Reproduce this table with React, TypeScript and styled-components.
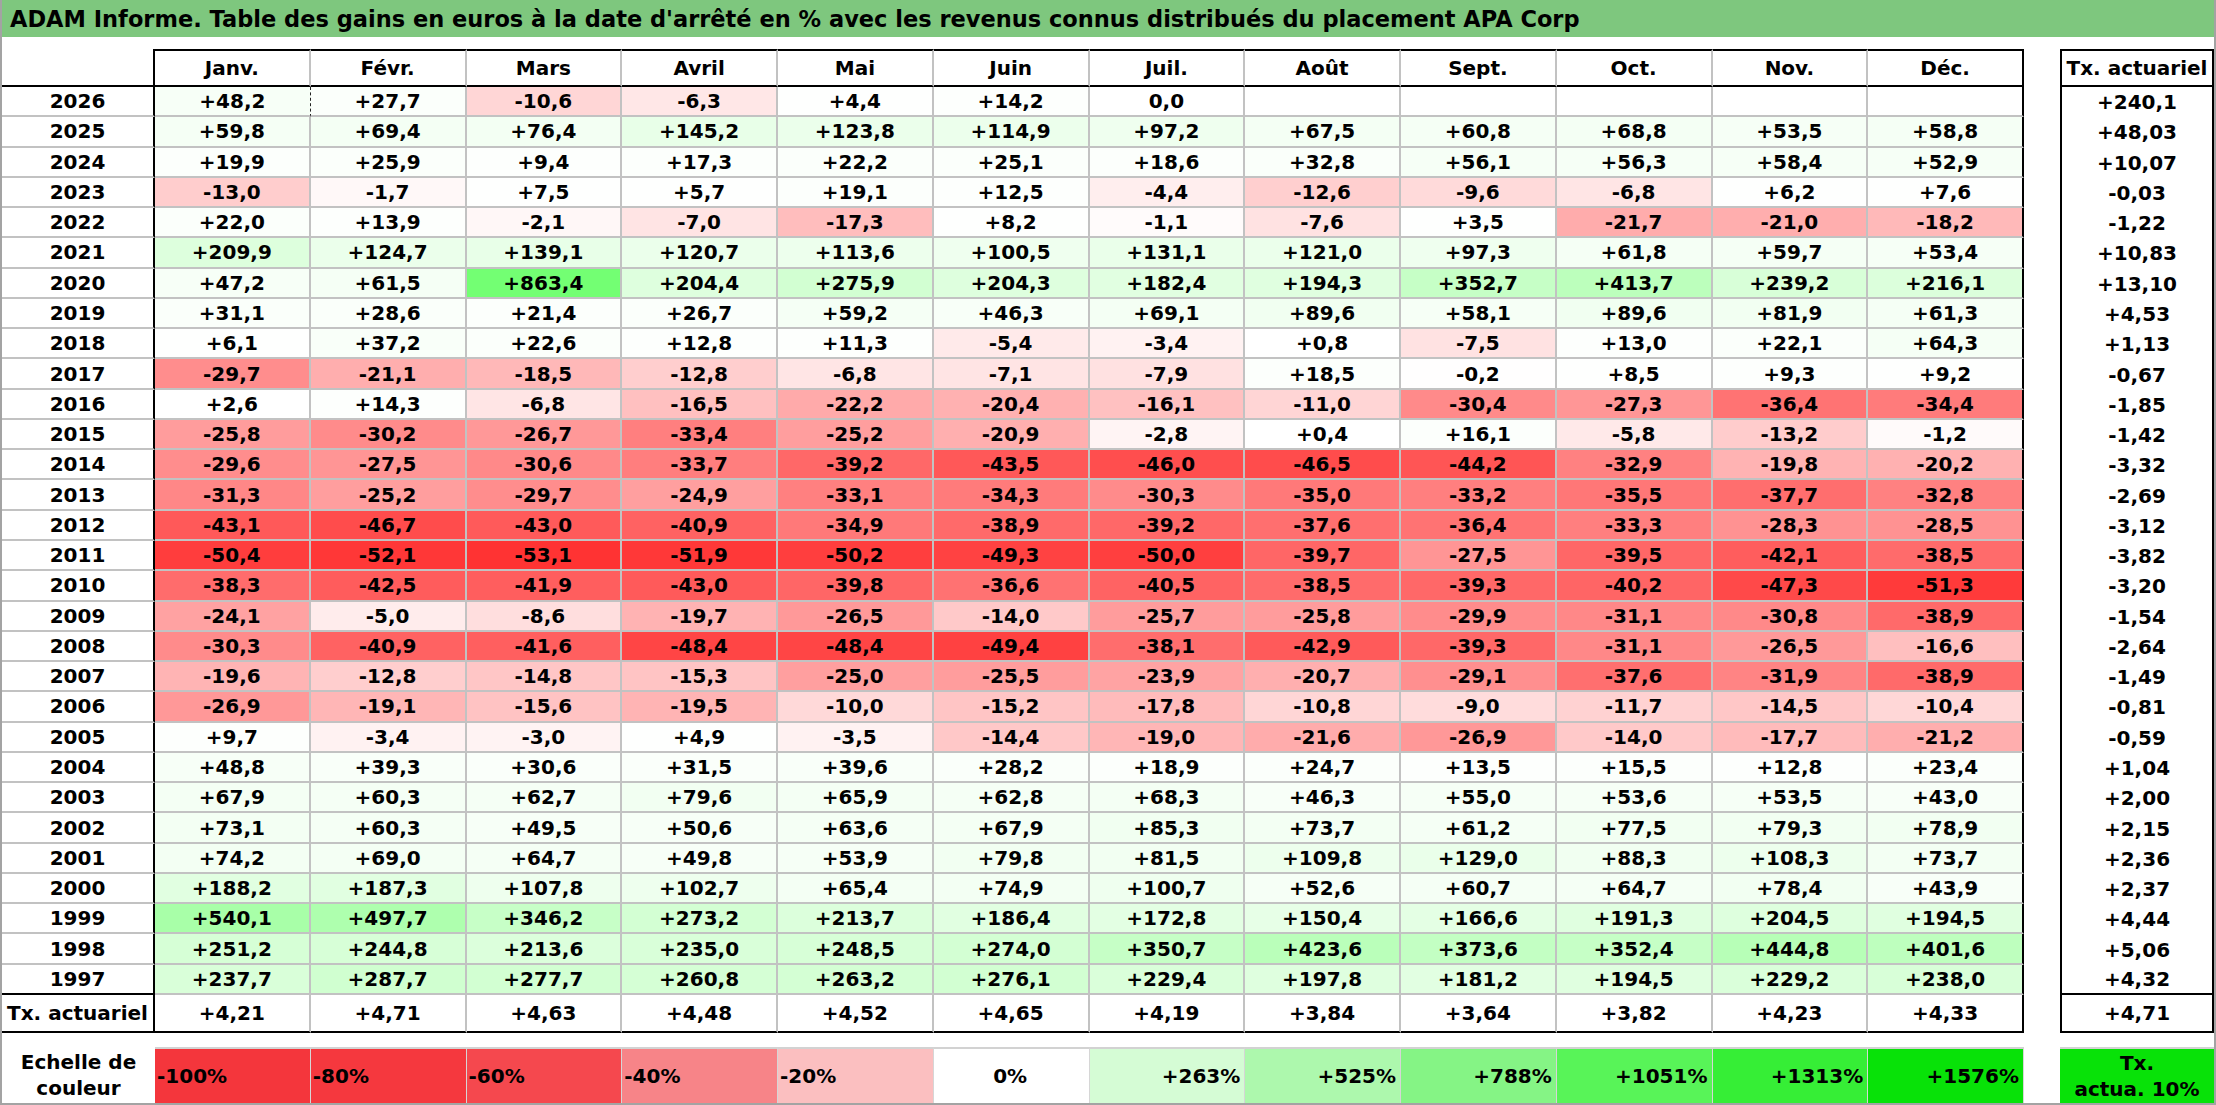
import React from 'react'
import styled, { createGlobalStyle } from 'styled-components'

const GlobalStyle = createGlobalStyle`
  html, body {
    margin: 0;
    padding: 0;
    background: #ffffff;
  }
  body {
    font-family: 'DejaVu Sans', 'Liberation Sans', sans-serif;
    color: #000;
  }
`

const GRID_LINE = '#c2c2c2'
const ROW_H = 30.27

const Page = styled.div`
  box-sizing: border-box;
  width: 2216px;
  height: 1105px;
  border: 2px solid #a3a3a3;
  border-top: none;
  background: #fff;
  display: flex;
  flex-direction: column;
`

const TitleBar = styled.div`
  height: 37px;
  background: #7ec77e;
  display: flex;
  align-items: center;
  padding-left: 8px;
  font-size: 22.5px;
  font-weight: bold;
  white-space: nowrap;
`

const Body = styled.div`
  padding-top: 12px;
  display: flex;
  flex-direction: column;
`

const TablesRow = styled.div`
  display: flex;
  gap: 36px;
`

const rowsTemplate = `38px repeat(30, ${ROW_H}px) 38px`

const MainGrid = styled.div`
  width: 2022px;
  display: grid;
  grid-template-columns: 153px repeat(12, 1fr);
  grid-template-rows: ${rowsTemplate};
  font-size: 20px;
  font-weight: bold;
`

const TxGrid = styled.div`
  width: 154px;
  display: grid;
  grid-template-rows: ${rowsTemplate};
  font-size: 20px;
  font-weight: bold;
`

const Cell = styled.div`
  box-sizing: border-box;
  display: flex;
  align-items: center;
  justify-content: center;
  white-space: nowrap;
  overflow: hidden;
`

const Corner = styled(Cell)`
  border-right: 2px solid #000;
  border-bottom: 2px solid #000;
`

const MonthHead = styled(Cell)<{ $last?: boolean }>`
  border-top: 2px solid #000;
  border-bottom: 2px solid #000;
  border-right: 2px solid ${p => (p.$last ? '#000' : GRID_LINE)};
`

const YearCell = styled(Cell)<{ $strong?: boolean }>`
  border-right: 2px solid #000;
  border-bottom: 2px solid ${p => (p.$strong ? '#000' : GRID_LINE)};
`

const ValueCell = styled(Cell)<{ $last?: boolean; $dashed?: boolean }>`
  border-bottom: 2px solid ${GRID_LINE};
  border-right: ${p =>
    p.$last ? '2px solid #000' : p.$dashed ? '1px dashed #222' : `2px solid ${GRID_LINE}`};
`

const FootLabel = styled(Cell)`
  border-right: 2px solid #000;
  border-bottom: 2px solid #000;
`

const FootCell = styled(Cell)<{ $last?: boolean }>`
  border-bottom: 2px solid #000;
  border-right: 2px solid ${p => (p.$last ? '#000' : GRID_LINE)};
`

const TxHead = styled(Cell)`
  border: 2px solid #000;
`

const TxCell = styled(Cell)<{ $strong?: boolean }>`
  border-left: 2px solid #000;
  border-right: 2px solid #000;
  border-bottom: ${p => (p.$strong ? '2px solid #000' : 'none')};
`

const TxFoot = styled(Cell)`
  border-left: 2px solid #000;
  border-right: 2px solid #000;
  border-bottom: 2px solid #000;
`

const LegendRow = styled.div`
  margin-top: 14px;
  height: 56px;
  display: flex;
  font-size: 20px;
  font-weight: bold;
`

const LegendLabel = styled.div`
  width: 153px;
  display: flex;
  align-items: center;
  justify-content: center;
  text-align: center;
  line-height: 26px;
`

const Swatches = styled.div`
  width: 1869px;
  display: grid;
  grid-template-columns: repeat(12, 1fr);
  margin-right: 36px;
`

const Swatch = styled.div<{ $bg: string; $align: 'left' | 'center' | 'right' }>`
  box-sizing: border-box;
  background: ${p => p.$bg};
  border-top: 2px solid #d2d2d2;
  border-right: 1px solid #d6d6d6;
  display: flex;
  align-items: center;
  justify-content: ${p =>
    p.$align === 'left' ? 'flex-start' : p.$align === 'right' ? 'flex-end' : 'center'};
  padding: 0 4px 0 2px;
`

const TxSwatch = styled.div`
  box-sizing: border-box;
  width: 154px;
  background: #08e208;
  border-top: 2px solid #d2d2d2;
  display: flex;
  align-items: center;
  justify-content: center;
  text-align: center;
  line-height: 26px;
`

const MONTHS = ['Janv.', 'Févr.', 'Mars', 'Avril', 'Mai', 'Juin', 'Juil.', 'Août', 'Sept.', 'Oct.', 'Nov.', 'Déc.']

const ROWS: [string, string[], string][] = [
  ['2026', ['+48,2', '+27,7', '-10,6', '-6,3', '+4,4', '+14,2', '0,0', '', '', '', '', ''], '+240,1'],
  ['2025', ['+59,8', '+69,4', '+76,4', '+145,2', '+123,8', '+114,9', '+97,2', '+67,5', '+60,8', '+68,8', '+53,5', '+58,8'], '+48,03'],
  ['2024', ['+19,9', '+25,9', '+9,4', '+17,3', '+22,2', '+25,1', '+18,6', '+32,8', '+56,1', '+56,3', '+58,4', '+52,9'], '+10,07'],
  ['2023', ['-13,0', '-1,7', '+7,5', '+5,7', '+19,1', '+12,5', '-4,4', '-12,6', '-9,6', '-6,8', '+6,2', '+7,6'], '-0,03'],
  ['2022', ['+22,0', '+13,9', '-2,1', '-7,0', '-17,3', '+8,2', '-1,1', '-7,6', '+3,5', '-21,7', '-21,0', '-18,2'], '-1,22'],
  ['2021', ['+209,9', '+124,7', '+139,1', '+120,7', '+113,6', '+100,5', '+131,1', '+121,0', '+97,3', '+61,8', '+59,7', '+53,4'], '+10,83'],
  ['2020', ['+47,2', '+61,5', '+863,4', '+204,4', '+275,9', '+204,3', '+182,4', '+194,3', '+352,7', '+413,7', '+239,2', '+216,1'], '+13,10'],
  ['2019', ['+31,1', '+28,6', '+21,4', '+26,7', '+59,2', '+46,3', '+69,1', '+89,6', '+58,1', '+89,6', '+81,9', '+61,3'], '+4,53'],
  ['2018', ['+6,1', '+37,2', '+22,6', '+12,8', '+11,3', '-5,4', '-3,4', '+0,8', '-7,5', '+13,0', '+22,1', '+64,3'], '+1,13'],
  ['2017', ['-29,7', '-21,1', '-18,5', '-12,8', '-6,8', '-7,1', '-7,9', '+18,5', '-0,2', '+8,5', '+9,3', '+9,2'], '-0,67'],
  ['2016', ['+2,6', '+14,3', '-6,8', '-16,5', '-22,2', '-20,4', '-16,1', '-11,0', '-30,4', '-27,3', '-36,4', '-34,4'], '-1,85'],
  ['2015', ['-25,8', '-30,2', '-26,7', '-33,4', '-25,2', '-20,9', '-2,8', '+0,4', '+16,1', '-5,8', '-13,2', '-1,2'], '-1,42'],
  ['2014', ['-29,6', '-27,5', '-30,6', '-33,7', '-39,2', '-43,5', '-46,0', '-46,5', '-44,2', '-32,9', '-19,8', '-20,2'], '-3,32'],
  ['2013', ['-31,3', '-25,2', '-29,7', '-24,9', '-33,1', '-34,3', '-30,3', '-35,0', '-33,2', '-35,5', '-37,7', '-32,8'], '-2,69'],
  ['2012', ['-43,1', '-46,7', '-43,0', '-40,9', '-34,9', '-38,9', '-39,2', '-37,6', '-36,4', '-33,3', '-28,3', '-28,5'], '-3,12'],
  ['2011', ['-50,4', '-52,1', '-53,1', '-51,9', '-50,2', '-49,3', '-50,0', '-39,7', '-27,5', '-39,5', '-42,1', '-38,5'], '-3,82'],
  ['2010', ['-38,3', '-42,5', '-41,9', '-43,0', '-39,8', '-36,6', '-40,5', '-38,5', '-39,3', '-40,2', '-47,3', '-51,3'], '-3,20'],
  ['2009', ['-24,1', '-5,0', '-8,6', '-19,7', '-26,5', '-14,0', '-25,7', '-25,8', '-29,9', '-31,1', '-30,8', '-38,9'], '-1,54'],
  ['2008', ['-30,3', '-40,9', '-41,6', '-48,4', '-48,4', '-49,4', '-38,1', '-42,9', '-39,3', '-31,1', '-26,5', '-16,6'], '-2,64'],
  ['2007', ['-19,6', '-12,8', '-14,8', '-15,3', '-25,0', '-25,5', '-23,9', '-20,7', '-29,1', '-37,6', '-31,9', '-38,9'], '-1,49'],
  ['2006', ['-26,9', '-19,1', '-15,6', '-19,5', '-10,0', '-15,2', '-17,8', '-10,8', '-9,0', '-11,7', '-14,5', '-10,4'], '-0,81'],
  ['2005', ['+9,7', '-3,4', '-3,0', '+4,9', '-3,5', '-14,4', '-19,0', '-21,6', '-26,9', '-14,0', '-17,7', '-21,2'], '-0,59'],
  ['2004', ['+48,8', '+39,3', '+30,6', '+31,5', '+39,6', '+28,2', '+18,9', '+24,7', '+13,5', '+15,5', '+12,8', '+23,4'], '+1,04'],
  ['2003', ['+67,9', '+60,3', '+62,7', '+79,6', '+65,9', '+62,8', '+68,3', '+46,3', '+55,0', '+53,6', '+53,5', '+43,0'], '+2,00'],
  ['2002', ['+73,1', '+60,3', '+49,5', '+50,6', '+63,6', '+67,9', '+85,3', '+73,7', '+61,2', '+77,5', '+79,3', '+78,9'], '+2,15'],
  ['2001', ['+74,2', '+69,0', '+64,7', '+49,8', '+53,9', '+79,8', '+81,5', '+109,8', '+129,0', '+88,3', '+108,3', '+73,7'], '+2,36'],
  ['2000', ['+188,2', '+187,3', '+107,8', '+102,7', '+65,4', '+74,9', '+100,7', '+52,6', '+60,7', '+64,7', '+78,4', '+43,9'], '+2,37'],
  ['1999', ['+540,1', '+497,7', '+346,2', '+273,2', '+213,7', '+186,4', '+172,8', '+150,4', '+166,6', '+191,3', '+204,5', '+194,5'], '+4,44'],
  ['1998', ['+251,2', '+244,8', '+213,6', '+235,0', '+248,5', '+274,0', '+350,7', '+423,6', '+373,6', '+352,4', '+444,8', '+401,6'], '+5,06'],
  ['1997', ['+237,7', '+287,7', '+277,7', '+260,8', '+263,2', '+276,1', '+229,4', '+197,8', '+181,2', '+194,5', '+229,2', '+238,0'], '+4,32'],
]

const FOOT = ['+4,21', '+4,71', '+4,63', '+4,48', '+4,52', '+4,65', '+4,19', '+3,84', '+3,64', '+3,82', '+4,23', '+4,33']

const LEGEND: { label: string; bg: string; align: 'left' | 'center' | 'right' }[] = [
  { label: '-100%', bg: '#f4363c', align: 'left' },
  { label: '-80%', bg: '#f5383e', align: 'left' },
  { label: '-60%', bg: '#f5484e', align: 'left' },
  { label: '-40%', bg: '#f78488', align: 'left' },
  { label: '-20%', bg: '#fbbfc0', align: 'left' },
  { label: '0%', bg: '#ffffff', align: 'center' },
  { label: '+263%', bg: '#d5fcd5', align: 'right' },
  { label: '+525%', bg: '#adf8ad', align: 'right' },
  { label: '+788%', bg: '#85f485', align: 'right' },
  { label: '+1051%', bg: '#58f458', align: 'right' },
  { label: '+1313%', bg: '#36ee36', align: 'right' },
  { label: '+1576%', bg: '#08e208', align: 'right' },
]

// colour scale: red saturates at the worst month, green at the top of the legend
const cellColor = (text: string): string => {
  if (!text) return '#ffffff'
  const v = parseFloat(text.replace(',', '.'))
  if (v < 0) {
    const t = Math.min(1, -v / 53.1)
    const c = Math.round(255 - 204 * t)
    return `rgb(255, ${c}, ${c})`
  }
  const t = Math.min(1, v / 1576)
  const c = Math.round(255 - 255 * t)
  return `rgb(${c}, 255, ${c})`
}

export default function App() {
  return (
    <>
      <GlobalStyle />
      <Page>
        <TitleBar>
          ADAM Informe. Table des gains en euros à la date d'arrêté en % avec les revenus connus distribués du placement APA Corp
        </TitleBar>
        <Body>
          <TablesRow>
            <MainGrid>
              <Corner />
              {MONTHS.map((m, i) => (
                <MonthHead key={m} $last={i === 11}>{m}</MonthHead>
              ))}
              {ROWS.map(([year, values], r) => (
                <React.Fragment key={year}>
                  <YearCell $strong={r === ROWS.length - 1}>{year}</YearCell>
                  {values.map((v, i) => (
                    <ValueCell
                      key={i}
                      $last={i === 11}
                      $dashed={r === 0 && i === 0}
                      style={{ background: cellColor(v) }}
                    >
                      {v}
                    </ValueCell>
                  ))}
                </React.Fragment>
              ))}
              <FootLabel>Tx. actuariel</FootLabel>
              {FOOT.map((v, i) => (
                <FootCell key={i} $last={i === 11}>{v}</FootCell>
              ))}
            </MainGrid>
            <TxGrid>
              <TxHead>Tx. actuariel</TxHead>
              {ROWS.map(([year, , tx], r) => (
                <TxCell key={year} $strong={r === ROWS.length - 1}>{tx}</TxCell>
              ))}
              <TxFoot>+4,71</TxFoot>
            </TxGrid>
          </TablesRow>
          <LegendRow>
            <LegendLabel>
              Echelle de
              <br />
              couleur
            </LegendLabel>
            <Swatches>
              {LEGEND.map(l => (
                <Swatch key={l.label} $bg={l.bg} $align={l.align}>{l.label}</Swatch>
              ))}
            </Swatches>
            <TxSwatch>
              Tx.
              <br />
              actua. 10%
            </TxSwatch>
          </LegendRow>
        </Body>
      </Page>
    </>
  )
}
